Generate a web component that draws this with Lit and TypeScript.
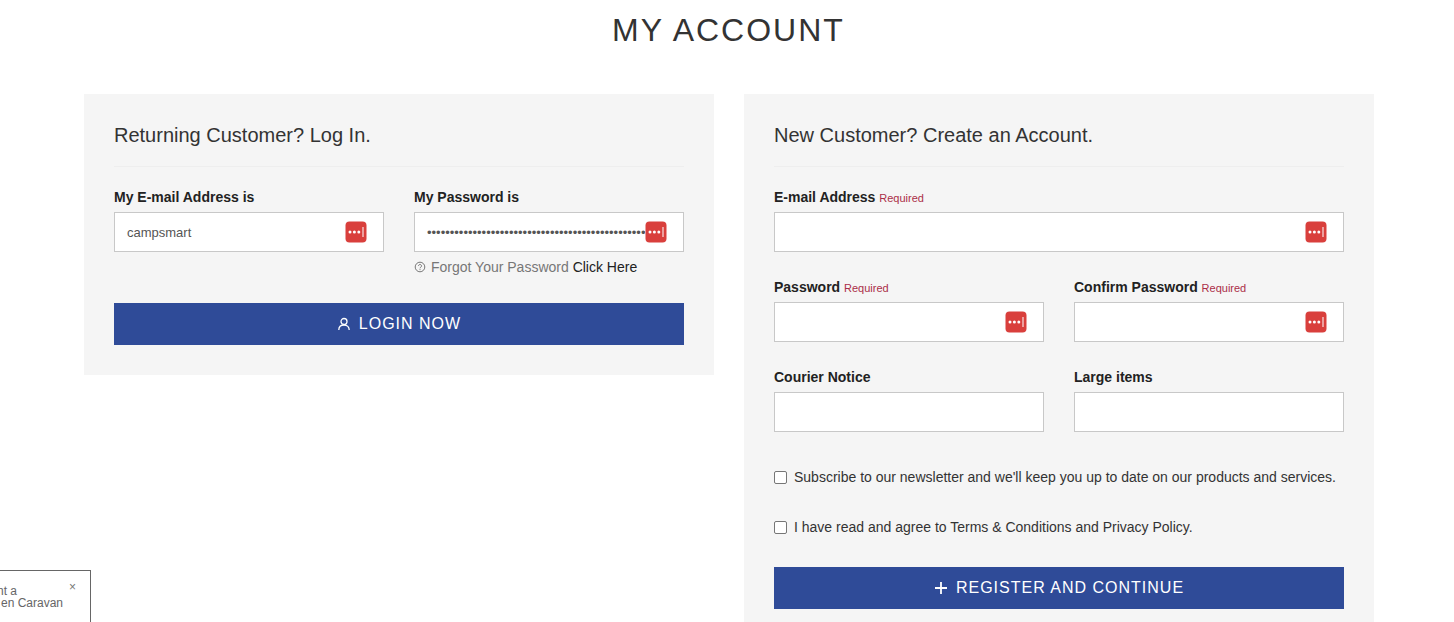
import { LitElement, html, css, svg } from "lit";
import { customElement } from "lit/decorators.js";

const keyIcon = html`<svg class="pm" viewBox="0 0 22 22" aria-hidden="true">
  <rect x=".5" y=".5" width="21" height="21" rx="4" fill="#d93f3c"></rect>
  <circle cx="5" cy="11" r="1.5" fill="#fff"></circle>
  <circle cx="9.4" cy="11" r="1.5" fill="#fff"></circle>
  <circle cx="13.8" cy="11" r="1.5" fill="#fff"></circle>
  <rect x="17.5" y="6" width="1" height="10" fill="#fff"></rect>
</svg>`;

@customElement("app-root")
export class AppRoot extends LitElement {
  static styles = css`
    :host {
      display: block;
      position: relative;
      height: 622px;
      overflow: hidden;
      background: #fff;
      font-family: "Liberation Sans", Arial, sans-serif;
      color: #333;
    }
    h1 {
      margin: 0;
      height: 94px;
      box-sizing: border-box;
      padding-top: 10px;
      padding-left: 3px;
      text-align: center;
      font-size: 32px;
      line-height: 40px;
      font-weight: 400;
      letter-spacing: 2px;
      color: #333;
    }
    .cols {
      display: grid;
      grid-template-columns: 630px 630px;
      gap: 30px;
      padding-left: 84px;
      align-items: start;
    }
    .panel {
      background: #f5f5f5;
      padding: 30px;
    }
    h2 {
      margin: 0 0 20px;
      padding-bottom: 19px;
      border-bottom: 1px solid #eeeeee;
      font-size: 20px;
      line-height: 23px;
      font-weight: 400;
      color: #333;
    }
    .grid {
      display: grid;
      grid-template-columns: 270px 270px;
      column-gap: 30px;
    }
    .full { grid-column: 1 / -1; }
    .field { margin-bottom: 25px; }
    label.t {
      display: block;
      height: 20px;
      margin-bottom: 5px;
      font-size: 14px;
      line-height: 20px;
      font-weight: 700;
      color: #222;
    }
    .req {
      font-size: 11px;
      font-weight: 400;
      color: #ab2e48;
    }
    .input {
      height: 40px;
      box-sizing: border-box;
      background: #fff;
      border: 1px solid #c8c8c8;
      display: flex;
      align-items: center;
      justify-content: space-between;
      padding: 0 16px 0 12px;
      font-size: 13px;
      color: #555;
    }
    .dots {
      flex: 1;
      min-width: 0;
      overflow: hidden;
      white-space: nowrap;
    }
    .pm { width: 22px; height: 22px; display: block; flex: none; }
    .forgot {
      display: flex;
      align-items: center;
      gap: 5px;
      margin-top: 5px;
      height: 20px;
      font-size: 14px;
      color: #777;
    }
    .forgot svg { width: 12px; height: 12px; flex: none; }
    .forgot a { color: #222; }
    .btn {
      height: 42px;
      display: flex;
      align-items: center;
      justify-content: center;
      gap: 8px;
      background: #2f4b98;
      color: #fff;
      font-size: 16px;
      letter-spacing: 1px;
    }
    .login { margin-top: 1px; }
    .check {
      display: flex;
      align-items: center;
      gap: 7px;
      height: 20px;
      margin-bottom: 30px;
      font-size: 14px;
      color: #333;
    }
    .check .box {
      width: 13px;
      height: 13px;
      box-sizing: border-box;
      border: 1px solid #767676;
      border-radius: 2px;
      background: #fff;
      flex: none;
    }
    .checks { margin-top: 10px; }
    .notice {
      position: absolute;
      left: 0;
      top: 570px;
      width: 91px;
      height: 52px;
      box-sizing: border-box;
      border: 1px solid #666;
      border-left: none;
      border-bottom: none;
      background: #fff;
      font-size: 12px;
      line-height: 12px;
      color: #666;
      padding-top: 14px;
    }
    .n1 { margin-left: -3px; }
    .n2 { margin-left: 1px; }
    .close {
      position: absolute;
      right: 14px;
      top: 10px;
      font-size: 12px;
      color: #777;
    }
  `;

  private field(label: string, opts: { req?: boolean; icon?: boolean; value?: string; full?: boolean } = {}) {
    return html`<div class="field ${opts.full ? "full" : ""}">
      <label class="t">${label}${opts.req ? html` <span class="req">Required</span>` : ""}</label>
      <div class="input"><span>${opts.value ?? ""}</span>${opts.icon ? keyIcon : ""}</div>
    </div>`;
  }

  render() {
    return html`
      <h1>MY ACCOUNT</h1>
      <div class="cols">
        <section class="panel">
          <h2>Returning Customer? Log In.</h2>
          <div class="grid">
            ${this.field("My E-mail Address is", { icon: true, value: "campsmart" })}
            <div class="field">
              <label class="t">My Password is</label>
              <div class="input"><span class="dots">${"•".repeat(48)}</span>${keyIcon}</div>
              <div class="forgot">
                <svg viewBox="0 0 12 12" fill="none" stroke="#777" stroke-width="1">
                  <circle cx="6" cy="6" r="4.8"></circle>
                  ${svg`<path d="M4.5 4.9a1.5 1.5 0 1 1 2.3 1.3c-.5.3-.8.6-.8 1.1"></path>
                  <path d="M6 8.2v.9"></path>`}
                </svg>
                <span>Forgot Your Password <a>Click Here</a></span>
              </div>
            </div>
          </div>
          <div class="btn login">
            <svg width="14" height="14" viewBox="0 0 14 14" fill="none" stroke="#fff" stroke-width="1.3">
              <circle cx="7" cy="4.5" r="3"></circle>
              <path d="M1.8 13c0-3 2-5 5.2-5s5.2 2 5.2 5"></path>
            </svg>
            <span>LOGIN NOW</span>
          </div>
        </section>
        <section class="panel">
          <h2>New Customer? Create an Account.</h2>
          <div class="grid">
            ${this.field("E-mail Address", { req: true, icon: true, full: true })}
            ${this.field("Password", { req: true, icon: true })}
            ${this.field("Confirm Password", { req: true, icon: true })}
            ${this.field("Courier Notice")}
            ${this.field("Large items")}
          </div>
          <div class="checks">
            <div class="check"><span class="box"></span><span>Subscribe to our newsletter and we'll keep you up to date on our products and services.</span></div>
            <div class="check"><span class="box"></span><span>I have read and agree to Terms &amp; Conditions and Privacy Policy.</span></div>
          </div>
          <div class="btn">
            <svg width="14" height="14" viewBox="0 0 14 14" stroke="#fff" stroke-width="1.8">
              <path d="M7 1v12M1 7h12"></path>
            </svg>
            <span>REGISTER AND CONTINUE</span>
          </div>
        </section>
      </div>
      <aside class="notice">
        <div class="n1">nt a</div>
        <div class="n2">en Caravan</div>
        <span class="close">×</span>
      </aside>
    `;
  }
}
